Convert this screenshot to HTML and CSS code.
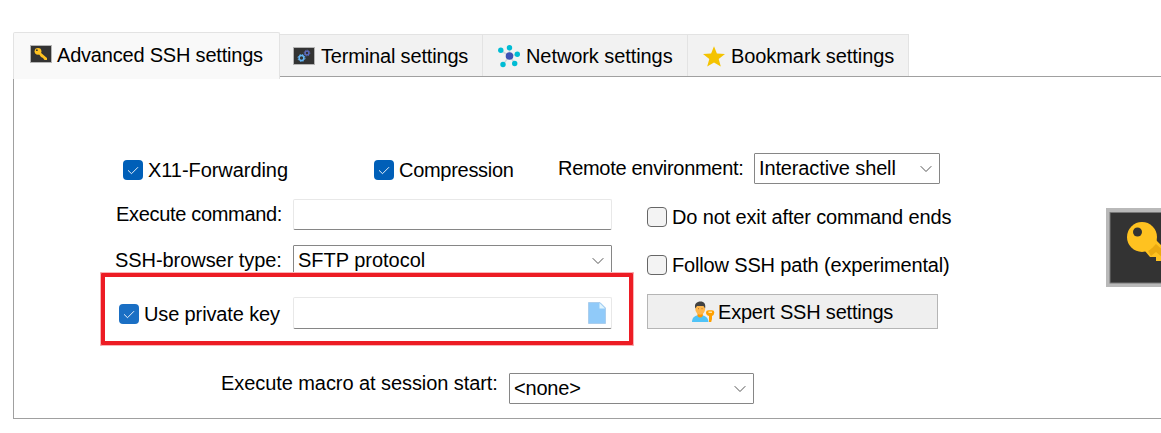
FILE: index.html
```html
<!DOCTYPE html>
<html lang="en">
<head>
<meta charset="utf-8">
<title>SSH session settings</title>
<link rel="stylesheet" href="styles.css">
</head>
<body>
<svg class="defs" width="0" height="0">
  <defs>
    <symbol id="key" viewBox="0 0 99 79">
      <rect width="99" height="79" fill="#b9b9b9"/>
      <rect x="4" y="4.500" width="91" height="70.500" fill="#333" stroke="#777" stroke-width="1"/>
      <path d="M39 43 50 32 79 61V66L74 70 68 67 66 63 61 63 55 57V53H50V49H44Z" fill="#ffc220"/>
      <path d="M42 43 50 36 79 62 76 66 50 44 45 48Z" fill="#ebaa10"/>
      <circle cx="36" cy="29" r="15" fill="#ffc220"/>
      <circle cx="31.500" cy="24" r="4.500" fill="#333"/>
    </symbol>
    <symbol id="chevron" viewBox="0 0 12 8"><path d="M.7 1.200 6 6.500 11.300 1.200" fill="none" stroke="#555" stroke-width="1"/></symbol>
    <symbol id="check" viewBox="0 0 20 20"><path d="M5 10.300 8.500 13.700 15 7.200" fill="none" stroke="#fff" stroke-width=".9"/></symbol>
  </defs>
</svg>
<nav class="tabs">
  <div class="tab tab-active">
    <svg class="tab-icon" width="22" height="18" viewBox="0 0 22 18"><rect x=".5" y=".5" width="21" height="17" fill="#333" stroke="#b4b4b4"/><path d="M8.500 8.500 10 7 17 13V15H14.500L13 13 11 12Z" fill="#ffc220"/><circle cx="8" cy="6.300" r="3.400" fill="#ffc220"/><circle cx="6.900" cy="5.200" r=".9" fill="#333"/></svg>
    <span class="text t-advanced">Advanced SSH settings</span>
  </div>
  <div class="tab tab-terminal">
    <svg class="tab-icon" width="22" height="18" viewBox="0 0 22 18"><rect x=".5" y=".5" width="21" height="17" fill="#333" stroke="#b4b4b4"/><g fill="none"><circle cx="8.500" cy="11" r="2.400" stroke="#64b5f6" stroke-width="1.500"/><circle cx="8.500" cy="11" r="3.500" stroke="#64b5f6" stroke-dasharray="1.500 1.250"/><circle cx="14" cy="6" r="1.900" stroke="#5c6bc0" stroke-width="1.400"/><circle cx="14" cy="6" r="2.800" stroke="#5c6bc0" stroke-dasharray="1.200 1"/></g></svg>
    <span class="text t-terminal">Terminal settings</span>
  </div>
  <div class="tab tab-network">
    <svg class="tab-icon" width="22" height="24" viewBox="0 0 22 24"><path d="M11.500 12 2.800 6.500M11.500 12V3.500M11.500 12 19.500 10.300M11.500 12 17 19.500M11.500 12 5 20.600" stroke="#cfd8dc" stroke-width="1.500"/><g fill="#00bcd4"><circle cx="2.800" cy="6.300" r="2.700"/><circle cx="11.500" cy="3.700" r="2.700"/><circle cx="19.300" cy="10.300" r="2.700"/><circle cx="16.700" cy="19.500" r="2.700"/><circle cx="5" cy="20.500" r="2.700"/></g><circle cx="11.500" cy="12" r="3.800" fill="#3f51b5"/></svg>
    <span class="text t-network">Network settings</span>
  </div>
  <div class="tab tab-bookmark">
    <svg class="tab-icon" width="22" height="21" viewBox="0 0 22 21"><path d="M11 .2 13.900 7.500 22 8 15.700 13 17.800 20.500 11 16.400 4.200 20.500 6.300 13 0 8 8.100 7.500Z" fill="#f4c300"/></svg>
    <span class="text t-bookmark">Bookmark settings</span>
  </div>
</nav>
<main class="panel">
  <form class="form">
    <div class="row row-options">
      <label class="option opt-x11"><span class="box box-on"><svg width="20" height="20"><use href="#check"/></svg></span><span class="text t-x11">X11-Forwarding</span></label>
      <label class="option opt-compression"><span class="box box-on"><svg width="20" height="20"><use href="#check"/></svg></span><span class="text t-compression">Compression</span></label>
      <span class="text t-remote">Remote environment:</span>
      <div class="combo combo-shell"><span class="text t-shell">Interactive shell</span><svg class="chevron" width="12" height="8"><use href="#chevron"/></svg></div>
    </div>
    <div class="row row-command">
      <span class="text t-command">Execute command:</span>
      <div class="input"></div>
      <label class="option opt-exit"><span class="box"></span><span class="text t-exit">Do not exit after command ends</span></label>
    </div>
    <div class="row row-browser">
      <span class="text t-browser">SSH-browser type:</span>
      <div class="combo combo-browser"><span class="text t-sftp">SFTP protocol</span><svg class="chevron" width="12" height="8"><use href="#chevron"/></svg></div>
      <label class="option opt-follow"><span class="box"></span><span class="text t-follow">Follow SSH path (experimental)</span></label>
    </div>
    <div class="row row-key">
      <div class="highlight">
        <label class="option opt-key"><span class="box box-on box-soft"><svg width="20" height="20"><use href="#check"/></svg></span><span class="text t-key">Use private key</span></label>
        <div class="input input-key"><svg width="18" height="22" viewBox="0 0 18 22"><path d="M.5.500H12L17.500 6V21.500H.5Z" fill="#90caf9" stroke="#a3c8e8" stroke-width=".8"/><path d="M11.500 1V6.500H17Z" fill="#e1f5fe"/></svg></div>
      </div>
      <div class="button"><svg class="user" width="23" height="22" viewBox="0 0 23 22"><path d="M0 21C0 16 3.500 14 8 14S16 16 16.500 21Z" fill="#4fc3f7"/><path d="M5.500 12H10.800V15Q8.200 18 5.500 15Z" fill="#ff9800"/><ellipse cx="8.200" cy="8" rx="4.900" ry="5.700" fill="#ffb74d"/><path d="M3.300 7.500C2 2.500 5 .5 8.500.5S14 3 13.100 7.500L11.500 5 5 5Z" fill="#424242"/><path d="M6 7.700H7M9.500 7.700H10.500" stroke="#a86a2a" stroke-width=".8"/><path d="M14 11.500Q14 9.200 16.500 9.200H20Q22.300 9.200 22.300 11.500T20 15V18L19.200 21H17V15Q14 14 14 11.500Z" fill="#ffa000"/><path d="M16.500 11.200H20" stroke="#fff1c9" stroke-width="1.200"/></svg><span class="text t-expert">Expert SSH settings</span></div>
    </div>
    <div class="row row-macro">
      <span class="text t-macro">Execute macro at session start:</span>
      <div class="combo combo-macro"><span class="text t-none">&lt;none&gt;</span><svg class="chevron" width="12" height="8"><use href="#chevron"/></svg></div>
    </div>
  </form>
  <svg class="session-icon" width="99" height="79"><use href="#key"/></svg>
</main>
</body>
</html>
```
FILE: styles.css
```css
* { box-sizing: border-box; }
html { overflow: hidden; background: #fff; }
body { margin: 0; width: 1161px; height: 433px; padding: 32px 0 0 13px; overflow: hidden; font: 20px/24px "Liberation Sans", Arial, sans-serif; color: #000; }
svg { display: block; flex: none; }
.defs { display: none; }
.text { flex: none; white-space: nowrap; letter-spacing: -0.2px; }

.tabs { display: flex; align-items: flex-start; height: 44px; }
.tab { display: flex; flex: none; align-items: flex-start; width: 205px; height: 42px; margin-top: 2px; padding: 9px 0 0 14px; background: #f2f2f2; border: solid #e3e3e3; border-width: 1px 1px 0 0; }
.tab-active { position: relative; z-index: 1; width: 267px; height: 47px; margin-top: 0; padding: 10px 0 0 16px; background: #f9f9f9; border-width: 1px 1px 0 1px; border-radius: 2px 2px 0 0; }
.tab-icon { margin: 2px 6px 0 0; }
.tab-active .tab-icon { margin-right: 5px; }
.tab-terminal { width: 203px; padding-left: 13px; }
.tab-terminal .tab-icon { margin-top: 3px; }
.tab-network { padding-left: 15px; }
.tab-network .tab-icon { margin-top: 0; }
.tab-bookmark { width: 221px; padding-left: 15px; }
.t-terminal { letter-spacing: -0.17px; }
.t-network, .t-bookmark { letter-spacing: -0.08px; }

.panel { display: flex; height: 343px; border: solid #a0a0a0; border-width: 1px 0 1px 1px; overflow: hidden; }
.form { flex: none; width: 1092px; padding-top: 76px; }
.session-icon { margin-top: 131px; }

.row { display: flex; align-items: flex-start; height: 46px; }
.option { display: flex; flex: none; gap: 5px; }
.box { flex: none; width: 20px; height: 20px; margin-top: 2px; background: #f3f3f3; border: 1px solid #666; border-radius: 4px; }
.box-on { background: #005fb8; border: 0; }
.box-soft { background: #1a6fc4; }
.combo { display: flex; flex: none; height: 31px; padding: 2px 7px 0 4px; justify-content: space-between; border: 1px solid #868686; border-radius: 1px; background: #fff; }
.chevron { margin-top: 9px; }
.input { flex: none; width: 319px; height: 31px; border: 1px solid #e8e8e8; border-bottom-color: #868686; border-radius: 2px; background: #fff; }

.opt-x11 { width: 251px; margin: 5px 0 0 109px; }
.t-x11 { letter-spacing: -0.06px; }
.opt-compression { width: 184px; margin-top: 5px; }
.t-compression { letter-spacing: -0.29px; }
.t-remote { width: 196px; margin-top: 3px; letter-spacing: -0.3px; }
.combo-shell { width: 186px; }
.t-shell { letter-spacing: -0.13px; }

.t-command, .t-browser { width: 177px; margin: 3px 0 0 102px; }
.t-command { letter-spacing: -0.32px; }
.opt-exit { margin: 6px 0 0 35px; }
.t-exit { letter-spacing: -0.14px; }
.t-browser { width: 178px; margin-left: 101px; letter-spacing: -0.06px; }
.combo-browser { width: 319px; }
.t-sftp { letter-spacing: -0.02px; }
.opt-follow { margin: 8px 0 0 35px; }
.t-follow { letter-spacing: -0.16px; }

.row-browser { height: 27px; }
.row-key { position: relative; height: 74px; }
.highlight { display: flex; align-items: flex-start; flex: none; width: 534px; height: 74px; margin-left: 86px; padding: 20px 0 0 13px; border: 5px solid #ed1c24; border-radius: 2px; outline: 1px solid #f9b4b7; outline-offset: -1px; background: #fff; }
.opt-key { width: 175px; margin: 5px 0 0 1px; }
.t-key { letter-spacing: -0.13px; }
.input-key { display: flex; justify-content: flex-end; height: 32px; margin-left: -1px; padding: 4px 5px 0 0; }
.button { display: flex; flex: none; width: 291px; height: 35px; margin: 22px 0 0 13px; padding: 5px 0 0 44px; background: #efefef; border: 1px solid #b5b5b5; }
.user { margin: 1px 3px 0 0; }

.row-macro { height: 31px; margin-top: 27px; }
.t-macro { width: 288px; margin: -2px 0 0 207px; letter-spacing: -0.07px; }
.combo-macro { width: 245px; }
```
